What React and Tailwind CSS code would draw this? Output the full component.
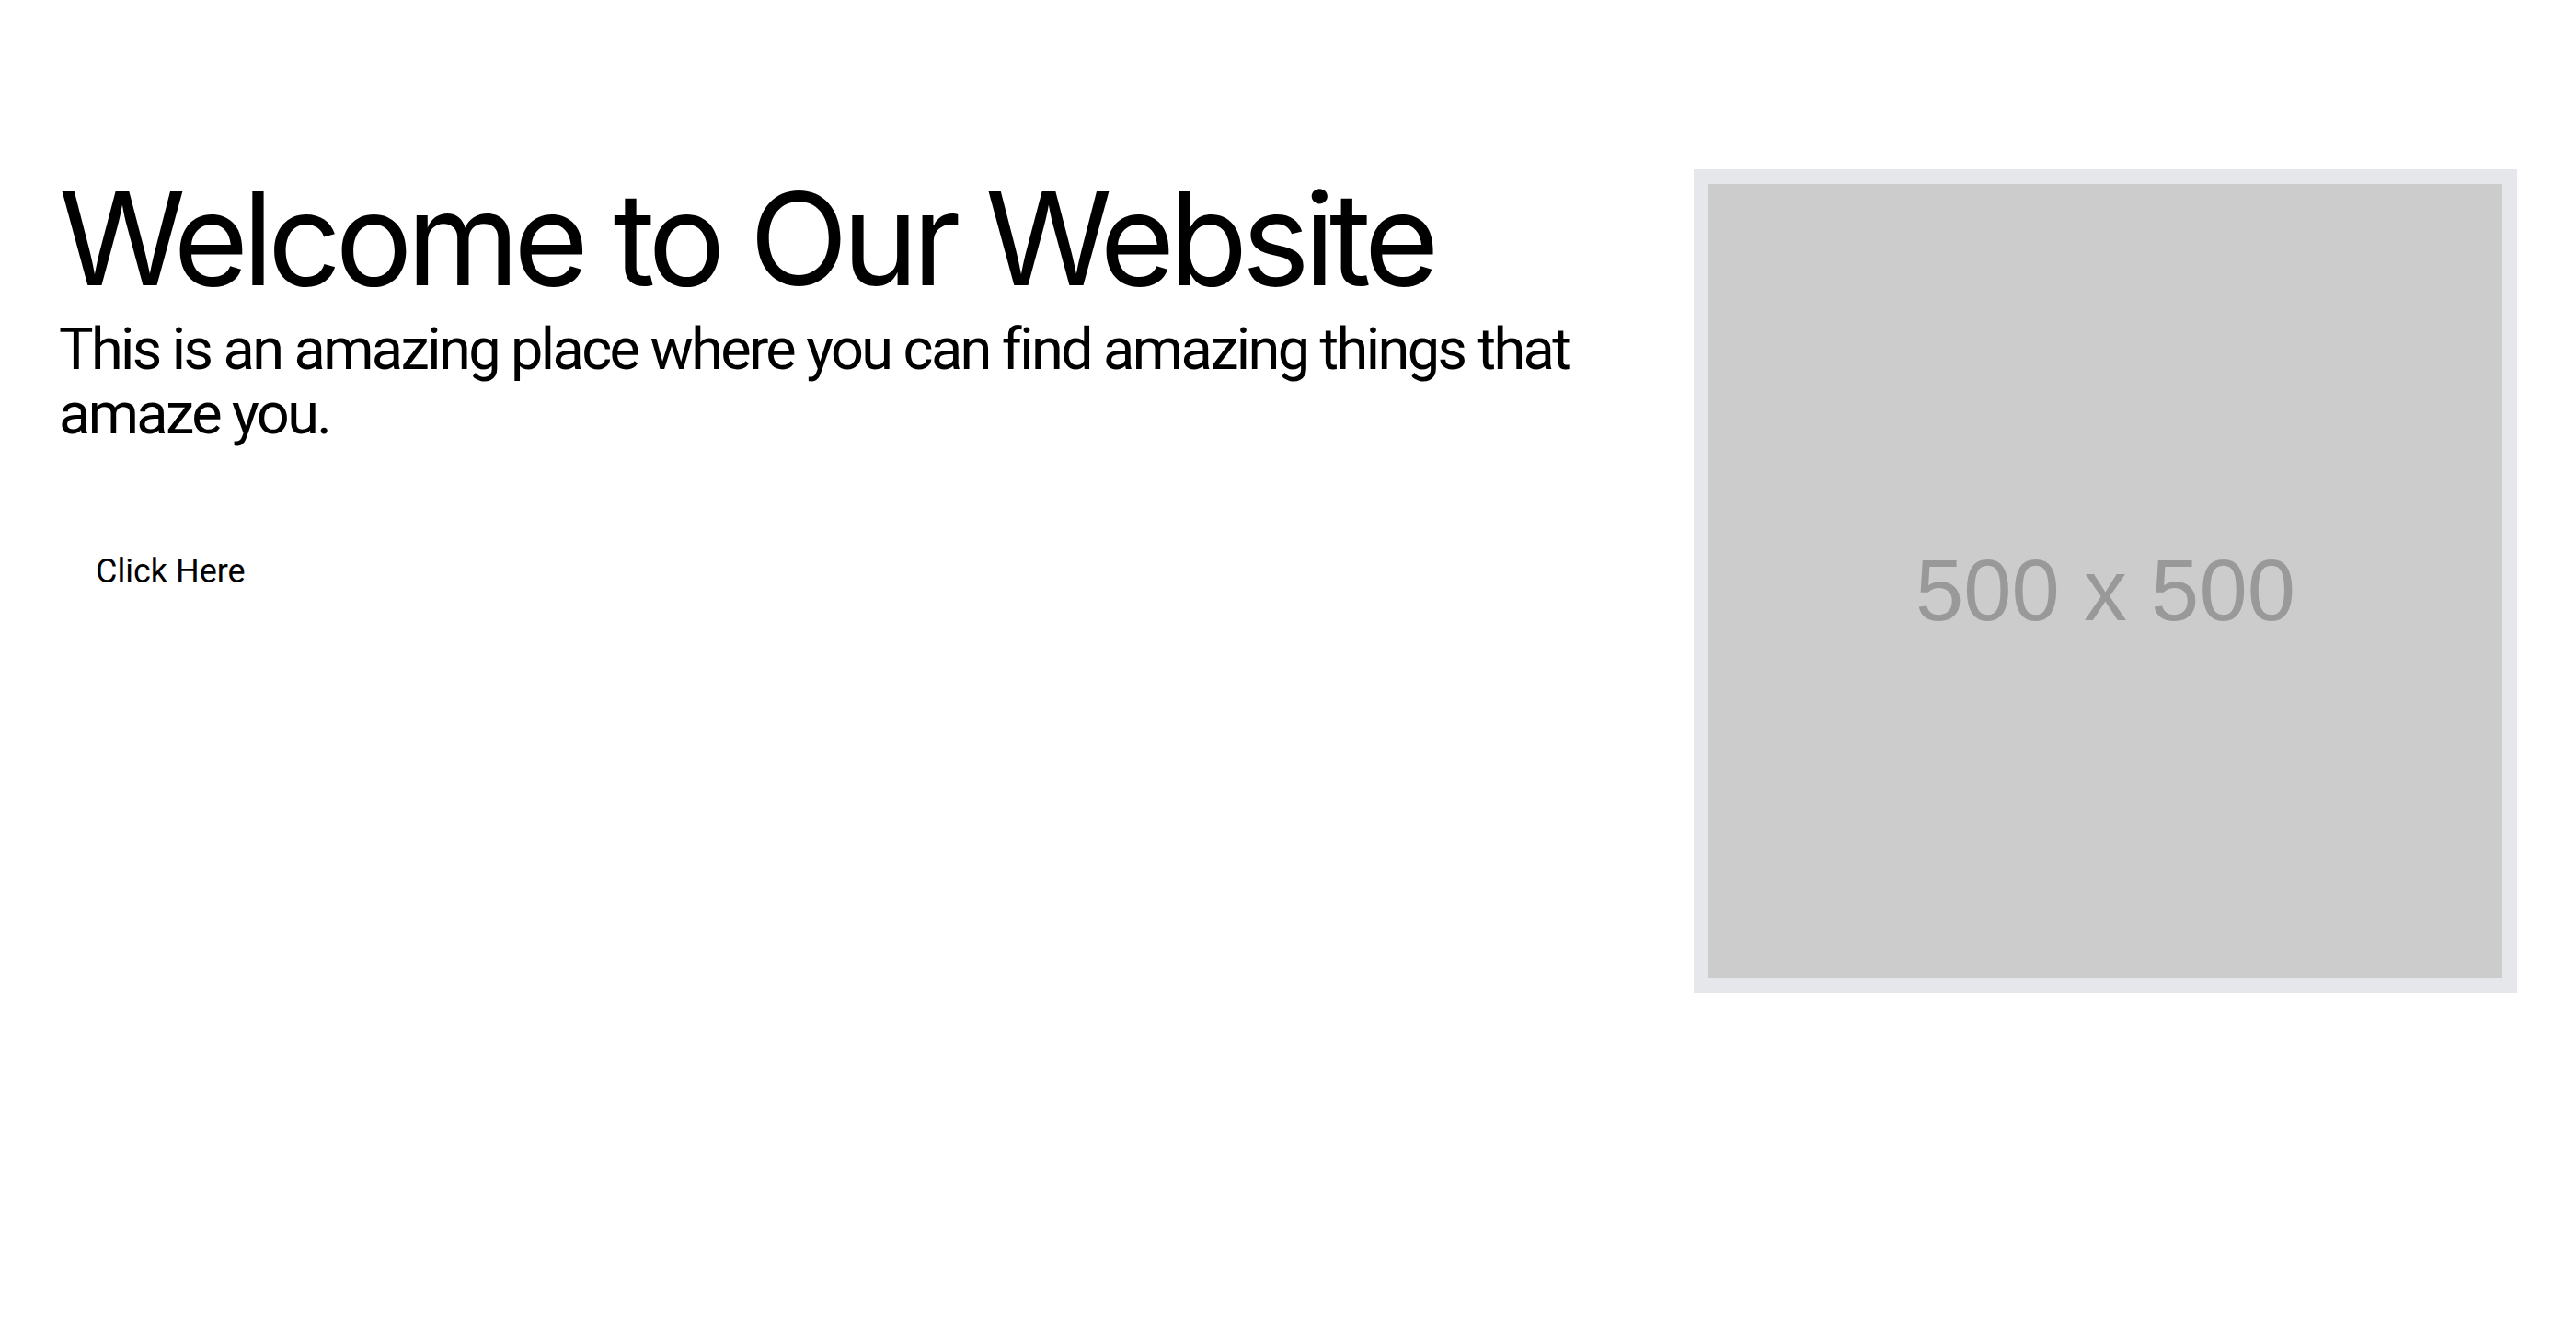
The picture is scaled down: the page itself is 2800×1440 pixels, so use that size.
export default function App() {
  return (
    <div className="min-h-screen bg-white flex items-start px-16 pt-[184px] gap-16 text-black font-['Inter',sans-serif]">
      <div className="flex-1 flex flex-col items-start pt-[5px]">
        <h1 className="text-[140px] leading-none font-normal tracking-[-0.046em]">Welcome to Our Website</h1>
        <p className="mt-4 text-[63px] leading-[70px] font-['Roboto',sans-serif] tracking-[-0.041em]">
          This is an amazing place where you can find amazing things that amaze you.
        </p>
        <button className="mt-[98px] px-10 py-4 text-[36px] leading-[44px] font-['Roboto',sans-serif]">
          Click Here
        </button>
      </div>
      <div className="w-[895px] h-[895px] shrink-0 bg-[#e5e7eb] p-4">
        <div className="w-full h-full bg-[#cccccc] flex items-center justify-center text-[#999999] text-[94px] font-['Liberation_Sans',Arial,sans-serif] pt-5">
          500 x 500
        </div>
      </div>
    </div>
  );
}
